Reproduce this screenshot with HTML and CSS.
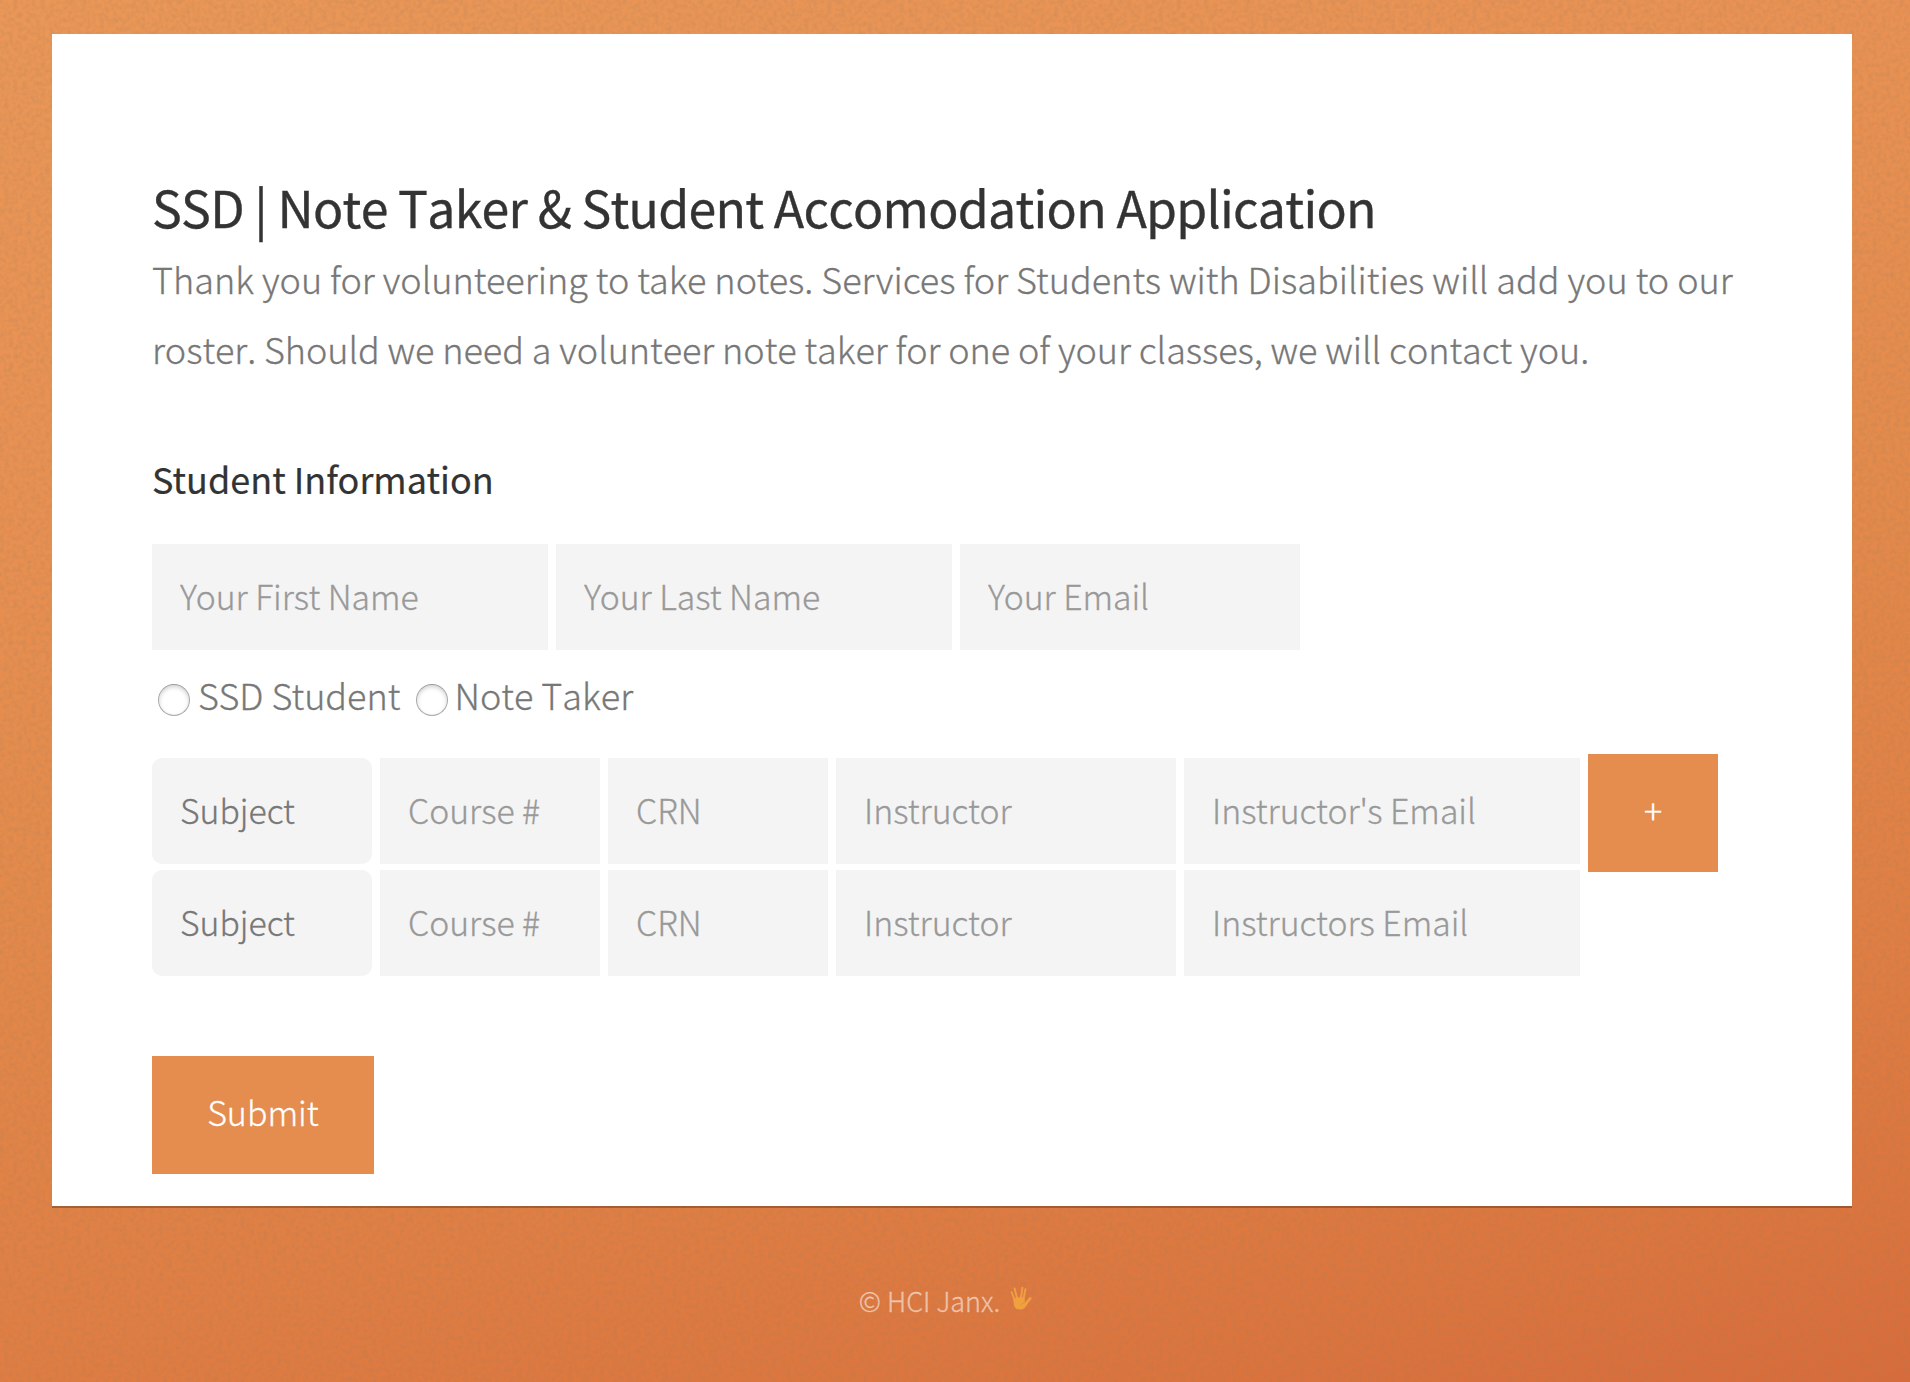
FILE: index.html
```html
<!DOCTYPE html>
<html lang="en">
<head>
<meta charset="utf-8">
<title>SSD | Note Taker &amp; Student Accomodation Application</title>
<link rel="stylesheet" href="styles.css">
</head>
<body>
<svg class="grain" aria-hidden="true">
  <filter id="grain" x="0" y="0" width="100%" height="100%">
    <feTurbulence type="fractalNoise" baseFrequency="0.22" numOctaves="2" seed="4"/>
    <feColorMatrix values="0 0 0 0 0.35  0 0 0 0 0.2  0 0 0 0 0.1  0.5 0 0 0 -0.18"/>
  </filter>
  <rect width="100%" height="100%" filter="url(#grain)"/>
</svg>
<main class="card">
  <h1 class="title">SSD | Note Taker &amp; Student Accomodation Application</h1>
  <p class="intro">Thank you for volunteering to take notes. Services for Students with Disabilities will add you to our<br><span class="intro-end">roster. Should we need a volunteer note taker for one of your classes, we will contact you.</span></p>
  <form>
    <h2 class="subtitle">Student Information</h2>
    <div class="row">
      <input class="field field-lg" type="text" placeholder="Your First Name">
      <input class="field field-lg" type="text" placeholder="Your Last Name">
      <input class="field field-md" type="text" placeholder="Your Email">
    </div>
    <div class="choices">
      <label class="choice"><input class="radio" type="radio" name="role"><span>SSD Student</span></label>
      <label class="choice choice-note"><input class="radio" type="radio" name="role"><span>Note Taker</span></label>
    </div>
    <div class="row course">
      <button class="field field-sm select" type="button">Subject</button>
      <input class="field field-sm" type="text" placeholder="Course #">
      <input class="field field-sm" type="text" placeholder="CRN">
      <input class="field field-md" type="text" placeholder="Instructor">
      <input class="field field-lg" type="text" placeholder="Instructor's Email">
      <button class="button add" type="button">+</button>
    </div>
    <div class="row course">
      <button class="field field-sm select" type="button">Subject</button>
      <input class="field field-sm" type="text" placeholder="Course #">
      <input class="field field-sm" type="text" placeholder="CRN">
      <input class="field field-md" type="text" placeholder="Instructor">
      <input class="field field-lg" type="text" placeholder="Instructors Email">
    </div>
    <button class="button submit" type="submit">Submit</button>
  </form>
</main>
<footer class="footer">
  <span>© HCI Janx.</span>
  <svg class="hand" viewBox="0 0 22 24" aria-hidden="true">
    <g fill="none" stroke="#f0a03e" stroke-linecap="round">
      <path stroke-width="1.9" d="M4.800 14.500 1.600 6.200M7 12 4.600 2.400M10.800 12.500 12.400 1.600M13.400 13 15.400 3.200"/>
      <path stroke-width="2.600" d="M15 18.500 20.300 12.400"/>
    </g>
    <path fill="#f0a03e" d="M3.400 12.500Q9 10.500 14.600 12v3.400l3.400 1.400C16.400 20 15 23.600 9.600 23.600 4.600 23.600 3.400 19.500 3.400 12.500z"/>
    <path fill="none" stroke="#df8c34" stroke-width=".6" d="M15.400 16.500Q11.500 16.500 10.500 19.500"/>
  </svg>
</footer>
</body>
</html>
```
FILE: styles.css
```css
*{box-sizing:border-box}
body{
  margin:0;
  min-height:1382px;
  padding:34px 58px 0 52px;
  position:relative;
  font-family:"Noto Sans CJK JP","Source Sans Pro",sans-serif;
  font-weight:300;
  color:#777;
  -webkit-text-stroke:.3px currentColor;
  background:linear-gradient(168deg,#ea9757 0%,#e99153 25%,#e48a4b 50%,#e07e43 75%,#dc743d 90%,#d86b3a 100%);
}
.grain{position:absolute;inset:0;width:100%;height:100%;z-index:-1}
.card{
  height:1172px;
  padding:140px 100px 0;
  background:#fff;
  box-shadow:0 2px 0 rgba(0,0,0,.25);
}
.title{
  margin:0;
  height:69px;
  font-size:50px;
  line-height:64px;
  font-weight:400;
  font-kerning:none;
  letter-spacing:-.73px;
  color:#333;
  -webkit-text-stroke-width:.35px;
  white-space:nowrap;
}
.intro{
  margin:0;
  font-size:36px;
  line-height:70px;
  white-space:nowrap;
}
.intro-end{font-kerning:none;letter-spacing:-.06px}
.subtitle{
  margin:65px 0 0;
  height:62px;
  font-size:36px;
  line-height:60px;
  font-weight:400;
  color:#333;
  -webkit-text-stroke-width:.2px;
}
.row{display:flex;gap:8px;margin-top:34px}
.field{
  height:106px;
  padding:0 28px 4px;
  border:0;
  border-radius:0;
  background:#f4f4f4;
  color:#777;
  font:inherit;
  font-size:33.75px;
}
.field::placeholder{color:#999;opacity:1}
.field-lg{width:396px}
.field-md{width:340px}
.field-sm{width:220px}
.select{border-radius:10px;text-align:left}
.choices{display:flex;gap:16px;height:104px;padding:0 0 16px 6px;font-size:36px;line-height:70px}
.choice{display:flex;align-items:center}
.choice-note{font-kerning:none}
.radio{
  appearance:none;
  width:32px;
  height:32px;
  margin:12px 8px 0 0;
  border:1px solid #aaa;
  border-top-color:#999;
  border-radius:50%;
  background:#fff;
  box-shadow:inset 0 2px 4px rgba(0,0,0,.18);
}
.choice-note .radio{margin-right:6px}
.course{height:106px;margin:4px 0 0;align-items:flex-start}
.course + .course{margin-top:6px}
.button{
  height:118px;
  padding:0 0 8px;
  border:0;
  background:#e58c4f;
  color:#fff;
  font:inherit;
  font-size:34px;
}
.add{width:130px;margin:-4px 0 -8px}
.submit{display:block;width:222px;margin-top:80px}
.footer{
  display:flex;
  justify-content:center;
  gap:10px;
  padding:65px 13px 0 0;
  font-size:27px;
  line-height:60px;
  color:rgba(255,255,255,.5);
}
.hand{width:22px;height:24px;margin-top:15px}
```
